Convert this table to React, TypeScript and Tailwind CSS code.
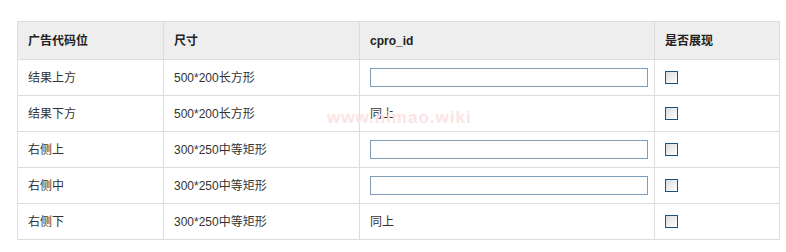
// 广告位配置表
const rows = [
  { slot: '结果上方', size: '500*200长方形', input: true },
  { slot: '结果下方', size: '500*200长方形', input: false },
  { slot: '右侧上', size: '300*250中等矩形', input: true },
  { slot: '右侧中', size: '300*250中等矩形', input: true },
  { slot: '右侧下', size: '300*250中等矩形', input: false },
];

function Check() {
  return (
    <span className="block w-[13px] h-[13px] border border-[#1c5180] bg-gradient-to-br from-[#dcdcd7] to-white" />
  );
}

export default function App() {
  return (
    <div
      className="relative w-[786px] h-[252px] bg-white pl-[17px] pt-[21px] text-[12px] text-[#333]"
      style={{ fontFamily: '"Liberation Sans", "Noto Sans CJK SC", sans-serif' }}
    >
      <table className="w-[762px] table-fixed border-collapse">
        <colgroup>
          <col className="w-[146px]" />
          <col className="w-[196px]" />
          <col className="w-[295px]" />
          <col className="w-[125px]" />
        </colgroup>
        <thead>
          <tr className="bg-[#eeeeee] h-[38px]">
            <th className="border border-[#dddddd] pl-[10px] text-left font-bold text-[#222]">广告代码位</th>
            <th className="border border-[#dddddd] pl-[10px] text-left font-bold text-[#222]">尺寸</th>
            <th className="border border-[#dddddd] pl-[10px] text-left font-bold text-[#222]">cpro_id</th>
            <th className="border border-[#dddddd] pl-[10px] text-left font-bold text-[#222]">是否展现</th>
          </tr>
        </thead>
        <tbody>
          {rows.map((r) => (
            <tr key={r.slot} className="h-[36px]">
              <td className="border border-[#dddddd] pl-[10px]">{r.slot}</td>
              <td className="border border-[#dddddd] pl-[10px]">{r.size}</td>
              <td className="border border-[#dddddd] pl-[10px]">
                {r.input ? (
                  <input className="block w-[278px] h-[19px] border border-[#7f9db9] bg-white outline-none" />
                ) : (
                  '同上'
                )}
              </td>
              <td className="border border-[#dddddd] pl-[10px]">
                <Check />
              </td>
            </tr>
          ))}
        </tbody>
      </table>
      <span className="absolute left-[327px] top-[105px] text-[17px] font-bold tracking-[1px] text-[#fce4e4] pointer-events-none">
        www.nimao.wiki
      </span>
    </div>
  );
}
